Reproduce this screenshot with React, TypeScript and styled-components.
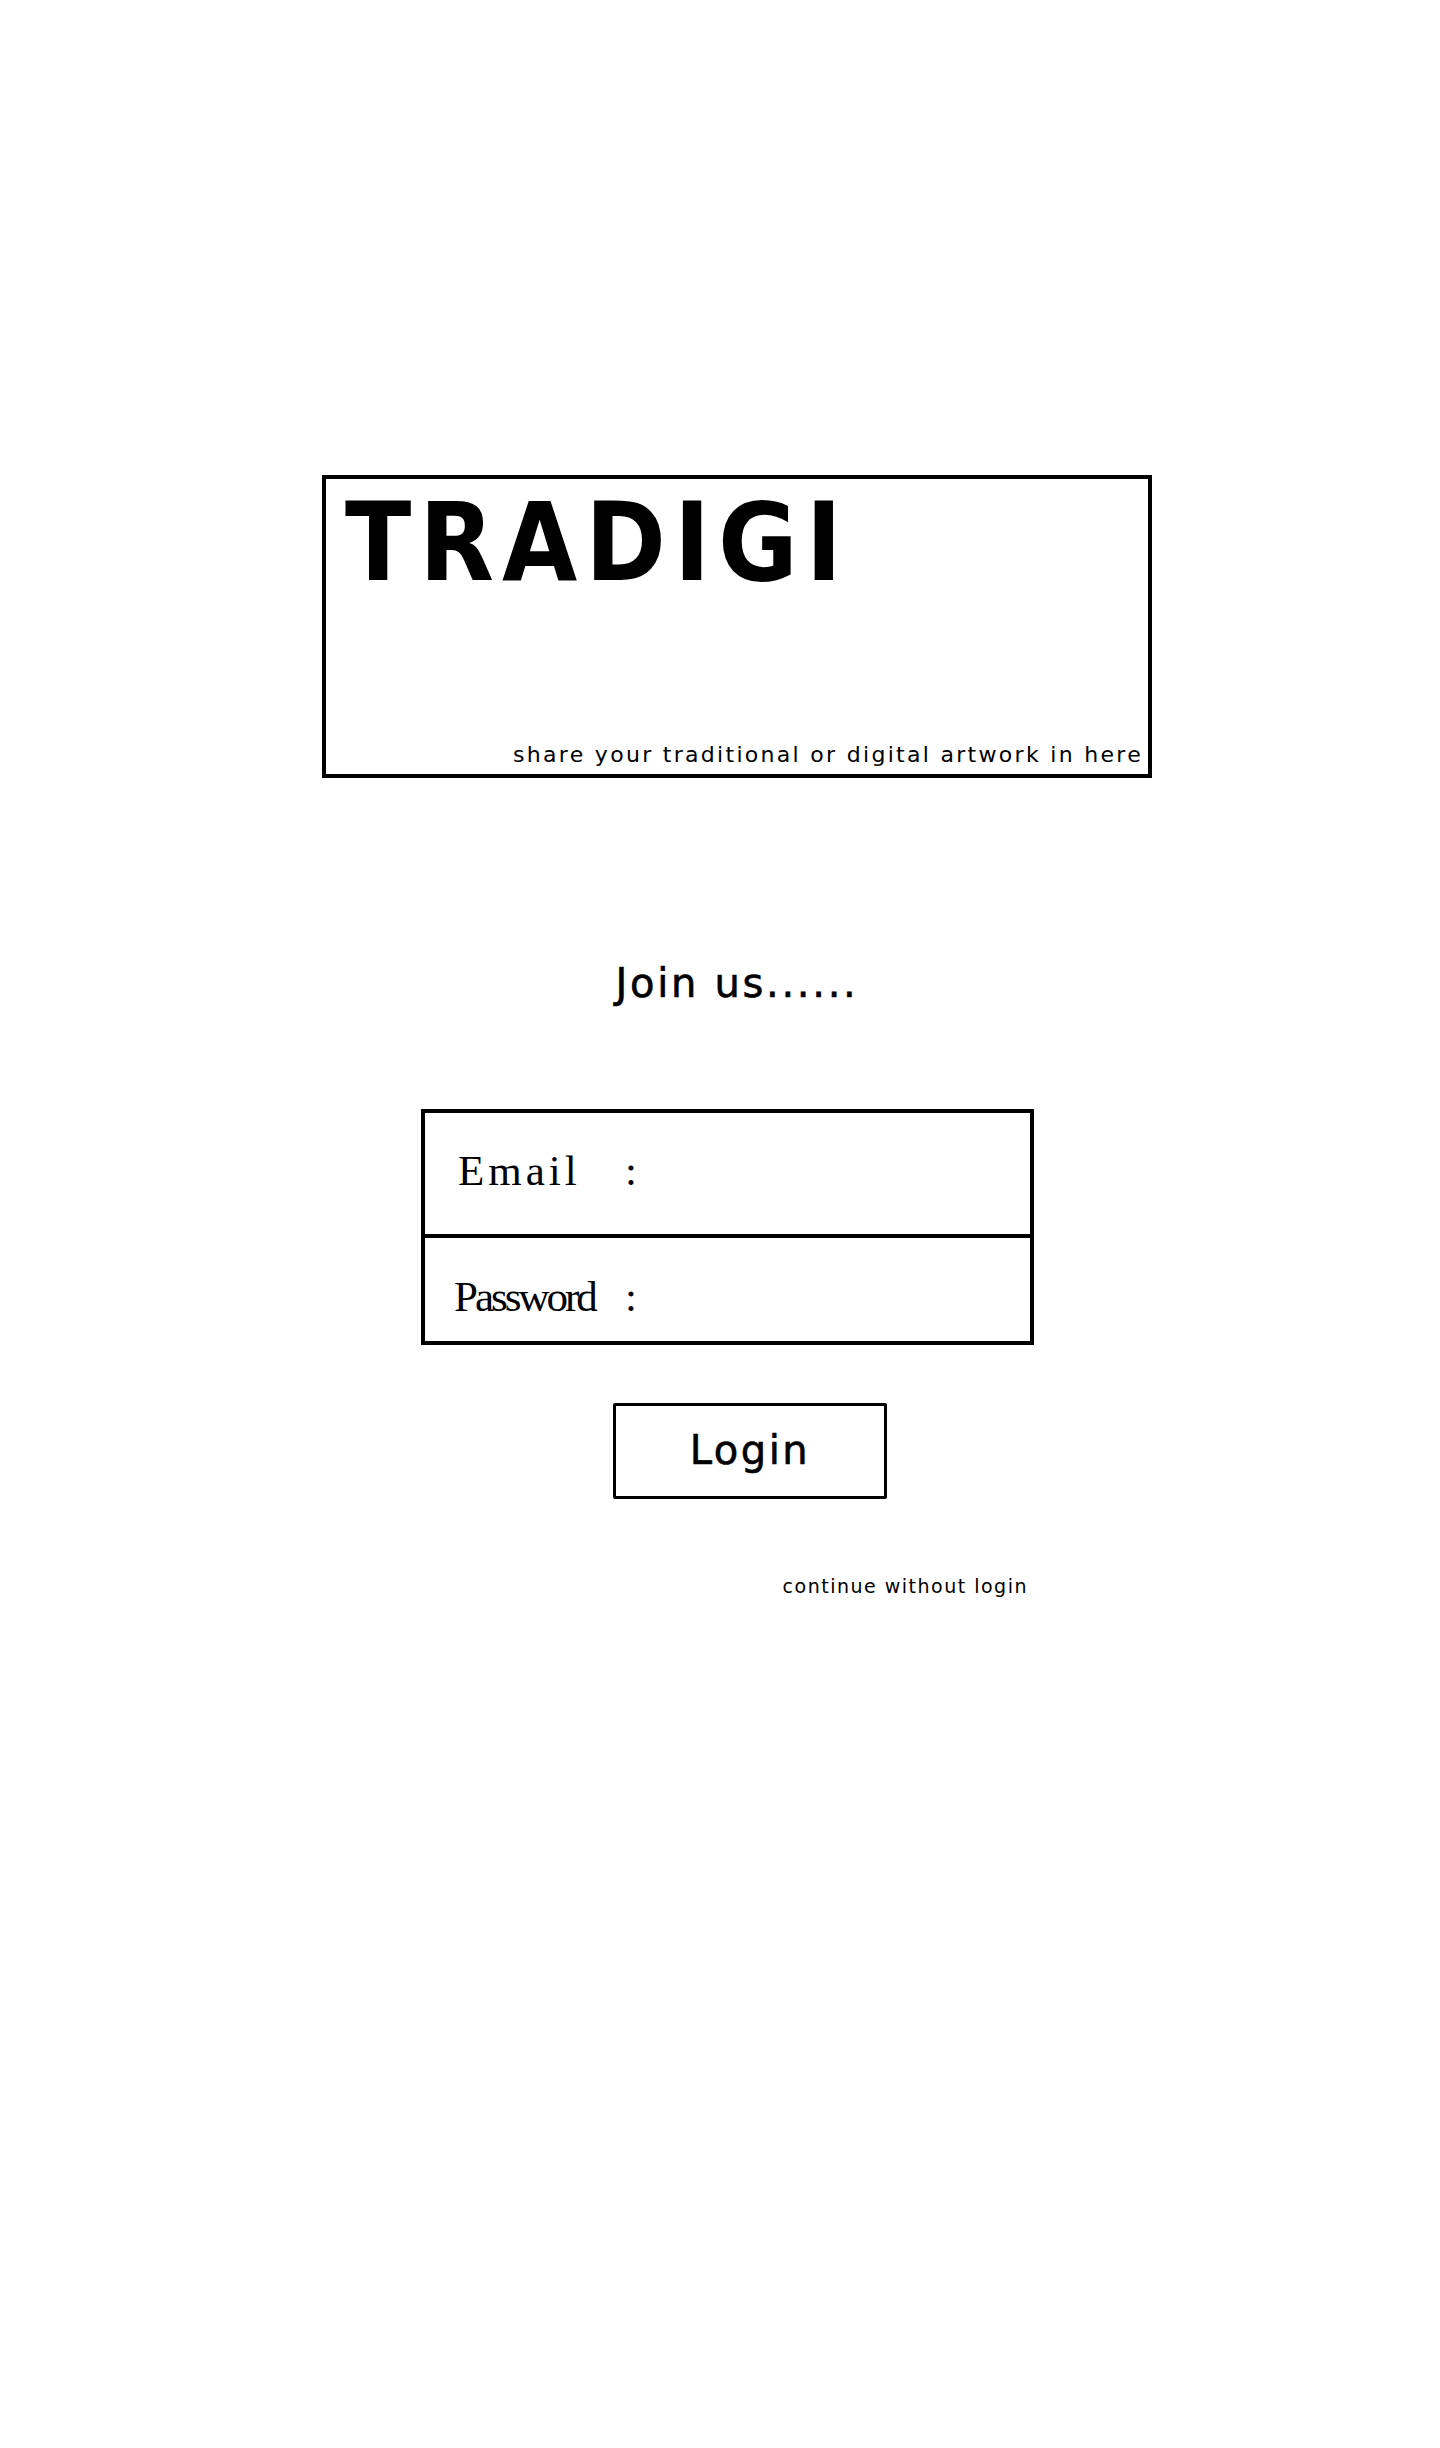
import React from "react";
import styled, { createGlobalStyle } from "styled-components";

const GlobalStyle = createGlobalStyle`
  html, body {
    margin: 0;
    padding: 0;
    background: #ffffff;
  }
  body {
    font-family: "DejaVu Sans", "Noto Sans", sans-serif;
    color: #000000;
  }
`;

const Page = styled.div`
  min-height: 2448px;
  padding-top: 475px;
  box-sizing: border-box;
`;

const Column = styled.div`
  width: 830px;
  margin-left: 322px;
  display: flex;
  flex-direction: column;
`;

const TitleBox = styled.header`
  height: 303px;
  box-sizing: border-box;
  border: 4px solid #000;
  display: flex;
  flex-direction: column;
  justify-content: space-between;
  padding: 10px 5px 8px 19px;
`;

const Title = styled.h1`
  margin: 0;
  font-family: "DejaVu Sans Condensed", "DejaVu Sans", sans-serif;
  font-weight: 700;
  font-size: 108px;
  line-height: 1;
  letter-spacing: 8px;
`;

const Tagline = styled.p`
  margin: 0;
  align-self: flex-end;
  font-size: 22px;
  line-height: 1;
  letter-spacing: 2.3px;
`;

const Heading = styled.h2`
  margin: 185px 0 0;
  text-align: center;
  font-size: 40px;
  font-weight: 400;
  line-height: 1;
  letter-spacing: 2.7px;
  -webkit-text-stroke: 0.6px #000;
`;

const FormArea = styled.form`
  width: 613px;
  margin: 106px 0 0 99px;
  display: flex;
  flex-direction: column;
`;

const FieldBox = styled.div`
  border: 4px solid #000;
  display: flex;
  flex-direction: column;
`;

const FieldRow = styled.label<{ $top: number; $bottom: number; $divider?: boolean }>`
  display: grid;
  grid-template-columns: 171px 20px 1fr;
  align-items: baseline;
  padding: ${({ $top, $bottom }) => `${$top}px 0 ${$bottom}px 29px`};
  border-bottom: ${({ $divider }) => ($divider ? "4px solid #000" : "none")};
  font-family: "Liberation Serif", "DejaVu Serif", serif;
  font-size: 43px;
  line-height: 1;
`;

const FieldLabel = styled.span<{ $spacing: number; $indent: number }>`
  padding-left: ${({ $indent }) => $indent}px;
  letter-spacing: ${({ $spacing }) => $spacing}px;
`;

const Colon = styled.span``;

const FieldInput = styled.input`
  border: none;
  outline: none;
  background: transparent;
  font: inherit;
  font-size: 28px;
  width: 100%;
  padding: 0;
`;

const LoginButton = styled.button`
  margin: 58px 0 0 192px;
  width: 274px;
  height: 96px;
  box-sizing: border-box;
  border: 3px solid #000;
  border-radius: 2px;
  background: #fff;
  display: flex;
  align-items: center;
  justify-content: center;
  font-family: "DejaVu Sans", "Noto Sans", sans-serif;
  font-size: 40px;
  line-height: 1;
  letter-spacing: 2.5px;
  -webkit-text-stroke: 0.6px #000;
  color: #000;
  cursor: pointer;
  padding: 0 0 2px;
`;

const SkipLink = styled.a`
  margin-top: 78px;
  align-self: flex-end;
  padding-right: 6px;
  font-size: 19px;
  line-height: 1;
  letter-spacing: 1.5px;
  color: #000;
  text-decoration: none;
`;

export default function App() {
  return (
    <>
      <GlobalStyle />
      <Page>
        <Column>
          <TitleBox>
            <Title>TRADIGI</Title>
            <Tagline>share your traditional or digital artwork in here</Tagline>
          </TitleBox>

          <Heading>Join us......</Heading>

          <FormArea onSubmit={(ev) => ev.preventDefault()}>
            <FieldBox>
              <FieldRow $top={36} $bottom={42} $divider>
                <FieldLabel $spacing={4} $indent={4}>
                  Email
                </FieldLabel>
                <Colon>:</Colon>
                <FieldInput type="email" />
              </FieldRow>
              <FieldRow $top={37} $bottom={23}>
                <FieldLabel $spacing={-3} $indent={0}>
                  Password
                </FieldLabel>
                <Colon>:</Colon>
                <FieldInput type="password" />
              </FieldRow>
            </FieldBox>

            <LoginButton type="submit">Login</LoginButton>

            <SkipLink href="#">continue without login</SkipLink>
          </FormArea>
        </Column>
      </Page>
    </>
  );
}
